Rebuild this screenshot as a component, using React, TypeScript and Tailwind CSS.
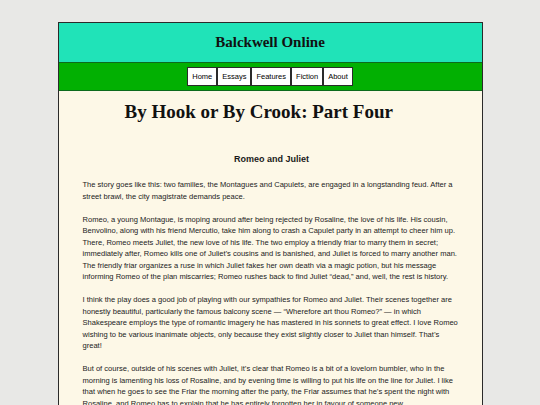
const navItems = ["Home", "Essays", "Features", "Fiction", "About"];

const paragraphs = [
  "The story goes like this: two families, the Montagues and Capulets, are engaged in a longstanding feud. After a street brawl, the city magistrate demands peace.",
  "Romeo, a young Montague, is moping around after being rejected by Rosaline, the love of his life. His cousin, Benvolino, along with his friend Mercutio, take him along to crash a Capulet party in an attempt to cheer him up. There, Romeo meets Juliet, the new love of his life. The two employ a friendly friar to marry them in secret; immediately after, Romeo kills one of Juliet\u2019s cousins and is banished, and Juliet is forced to marry another man. The friendly friar organizes a ruse in which Juliet fakes her own death via a magic potion, but his message informing Romeo of the plan miscarries; Romeo rushes back to find Juliet \u201cdead,\u201d and, well, the rest is history.",
  "I think the play does a good job of playing with our sympathies for Romeo and Juliet. Their scenes together are honestly beautiful, particularly the famous balcony scene \u2014 \u201cWherefore art thou Romeo?\u201d \u2014 in which Shakespeare employs the type of romantic imagery he has mastered in his sonnets to great effect. I love Romeo wishing to be various inanimate objects, only because they exist slightly closer to Juliet than himself. That\u2019s great!",
  "But of course, outside of his scenes with Juliet, it\u2019s clear that Romeo is a bit of a lovelorn bumbler, who in the morning is lamenting his loss of Rosaline, and by evening time is willing to put his life on the line for Juliet. I like that when he goes to see the Friar the morning after the party, the Friar assumes that he\u2019s spent the night with Rosaline, and Romeo has to explain that he has entirely forgotten her in favour of someone new.",
];

export default function App() {
  return (
    <div className="h-[405px] overflow-hidden bg-[#e8e8e6] pt-[22px] font-['Liberation_Sans',Arial,sans-serif]">
      <div className="mx-auto w-[425px] border border-[#2a2a2a] bg-[#fdf8e7]">
        <header className="flex h-[39px] items-center justify-center bg-[#20e3b8]">
          <h1 className="font-['Liberation_Serif',serif] text-[15px] font-bold text-[#111]">Balckwell Online</h1>
        </header>
        <nav className="flex justify-center border-y border-y-[#0d6b1d] bg-[#02b002] py-[4px]">
          {navItems.map((item) => (
            <a
              key={item}
              className="border border-[#2b2b2b] bg-white px-[4px] py-[4px] text-[7.5px] leading-[9px] text-black"
            >
              {item}
            </a>
          ))}
        </nav>
        <main className="pb-6 pl-[24px] pr-[21px] pt-[9px]">
          <h2 className="pl-[42px] font-['Liberation_Serif',serif] text-[19px] font-bold leading-[23px] text-[#111]">
            By Hook or By Crook: Part Four
          </h2>
          <h3 className="mt-[31px] text-center text-[9px] font-bold leading-[11px] text-[#1a1a1a]">Romeo and Juliet</h3>
          <div className="mt-[14px] flex flex-col gap-[11.5px] text-[7.55px] leading-[11.5px] text-[#222]">
            {paragraphs.map((p, i) => (
              <p key={i}>{p}</p>
            ))}
          </div>
        </main>
      </div>
    </div>
  );
}
